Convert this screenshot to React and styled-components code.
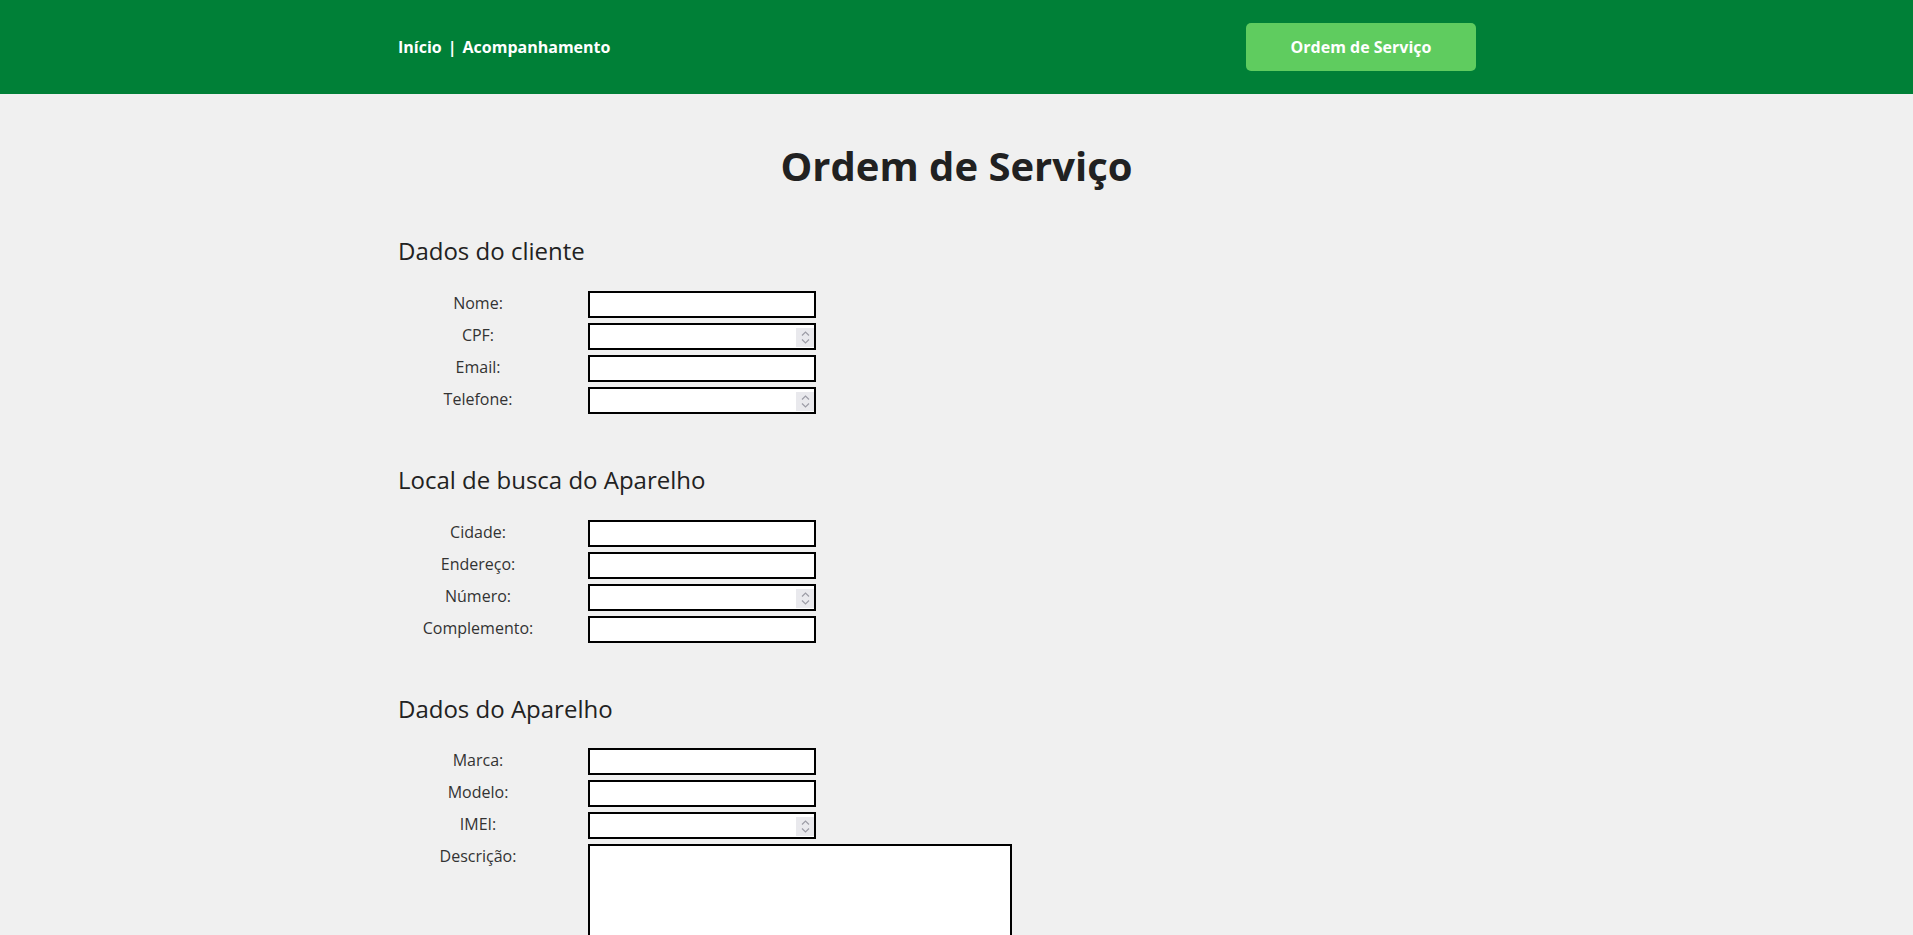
import styled, { createGlobalStyle } from "styled-components";

const GlobalStyle = createGlobalStyle`
  * {
    box-sizing: border-box;
  }

  body {
    margin: 0;
    background: #f0f0f0;
    font-family: "Open Sans", "Noto Sans", sans-serif;
    color: #222;
  }

  input[type="number"]::-webkit-inner-spin-button,
  input[type="number"]::-webkit-outer-spin-button {
    -webkit-appearance: none;
    margin: 0;
  }
`;

const Header = styled.header`
  background: #008037;
  height: 94px;
`;

const Nav = styled.nav`
  width: 1117px;
  height: 100%;
  margin: 0 auto;
  padding-right: 39px;
  display: flex;
  align-items: center;
  justify-content: space-between;
`;

const NavLinks = styled.div`
  display: flex;
  gap: 6px;
  color: #fff;
  font-size: 16px;
  font-weight: 700;
`;

const NavLink = styled.a`
  color: #fff;
  text-decoration: none;
`;

const ServiceButton = styled.button`
  width: 230px;
  height: 48px;
  border: none;
  border-radius: 5px;
  background: #5fcc5f;
  color: #fff;
  font-family: inherit;
  font-size: 16px;
  font-weight: 700;
  cursor: pointer;
`;

const Main = styled.main`
  width: 1117px;
  margin: 0 auto;
  min-height: 2763px;
  padding-top: 48px;
`;

const Title = styled.h1`
  margin: 0 0 47px;
  text-align: center;
  font-size: 40px;
  line-height: 1.2;
  font-weight: 700;
  color: #212121;
`;

const Section = styled.section`
  margin-bottom: 52px;
`;

const SectionTitle = styled.h2`
  margin: 0 0 25px;
  font-size: 24px;
  line-height: 1.2;
  font-weight: 400;
  color: #222;
`;

const Fields = styled.div`
  display: grid;
  grid-template-columns: 160px auto;
  column-gap: 30px;
  row-gap: 5px;
  align-items: start;
  justify-items: start;
`;

const Label = styled.label`
  justify-self: stretch;
  text-align: center;
  font-size: 16px;
  line-height: 23px;
  padding-top: 1px;
  color: #333;
`;

const FieldBox = styled.div`
  position: relative;
  display: flex;
`;

const Input = styled.input`
  width: 228px;
  height: 27px;
  border: 2px solid #000;
  border-radius: 0;
  background: #fff;
  padding: 1px 2px;
  font-family: inherit;
  font-size: 14px;
  -moz-appearance: textfield;
`;

const Spinner = styled.span`
  position: absolute;
  top: 5px;
  right: 2px;
  width: 18px;
  height: 19px;
  background: #e9e9ed;
  display: flex;
  flex-direction: column;
  align-items: center;
  justify-content: center;
  gap: 3px;
  pointer-events: none;
`;

const TextArea = styled.textarea`
  width: 424px;
  height: 200px;
  border: 2px solid #000;
  border-radius: 0;
  background: #fff;
  font-family: inherit;
  font-size: 14px;
  resize: vertical;
`;

const sections = [
  {
    title: "Dados do cliente",
    fields: [
      { id: "nome", label: "Nome:", type: "text" },
      { id: "cpf", label: "CPF:", type: "number" },
      { id: "email", label: "Email:", type: "email" },
      { id: "telefone", label: "Telefone:", type: "number" },
    ],
  },
  {
    title: "Local de busca do Aparelho",
    fields: [
      { id: "cidade", label: "Cidade:", type: "text" },
      { id: "endereco", label: "Endereço:", type: "text" },
      { id: "numero", label: "Número:", type: "number" },
      { id: "complemento", label: "Complemento:", type: "text" },
    ],
  },
  {
    title: "Dados do Aparelho",
    fields: [
      { id: "marca", label: "Marca:", type: "text" },
      { id: "modelo", label: "Modelo:", type: "text" },
      { id: "imei", label: "IMEI:", type: "number" },
      { id: "descricao", label: "Descrição:", type: "textarea" },
    ],
  },
];

function Chevron({ up }) {
  return (
    <svg width="9" height="5" viewBox="0 0 9 5" fill="none">
      <path
        d={up ? "M1 4.5 L4.5 1 L8 4.5" : "M1 0.5 L4.5 4 L8 0.5"}
        stroke="#9c9ca6"
        strokeWidth="1.2"
      />
    </svg>
  );
}

function Field({ field }) {
  if (field.type === "textarea") {
    return <TextArea id={field.id} />;
  }
  return (
    <FieldBox>
      <Input id={field.id} type={field.type} />
      {field.type === "number" && (
        <Spinner>
          <Chevron up />
          <Chevron />
        </Spinner>
      )}
    </FieldBox>
  );
}

function App() {
  return (
    <>
      <GlobalStyle />
      <Header>
        <Nav>
          <NavLinks>
            <NavLink href="#">Início</NavLink>
            <span>|</span>
            <NavLink href="#">Acompanhamento</NavLink>
          </NavLinks>
          <ServiceButton>Ordem de Serviço</ServiceButton>
        </Nav>
      </Header>

      <Main>
        <Title>Ordem de Serviço</Title>
        {sections.map((section) => (
          <Section key={section.title}>
            <SectionTitle>{section.title}</SectionTitle>
            <Fields>
              {section.fields.flatMap((field) => [
                <Label key={field.id + "-label"} htmlFor={field.id}>
                  {field.label}
                </Label>,
                <Field key={field.id} field={field} />,
              ])}
            </Fields>
          </Section>
        ))}
      </Main>
    </>
  );
}

export default App;
